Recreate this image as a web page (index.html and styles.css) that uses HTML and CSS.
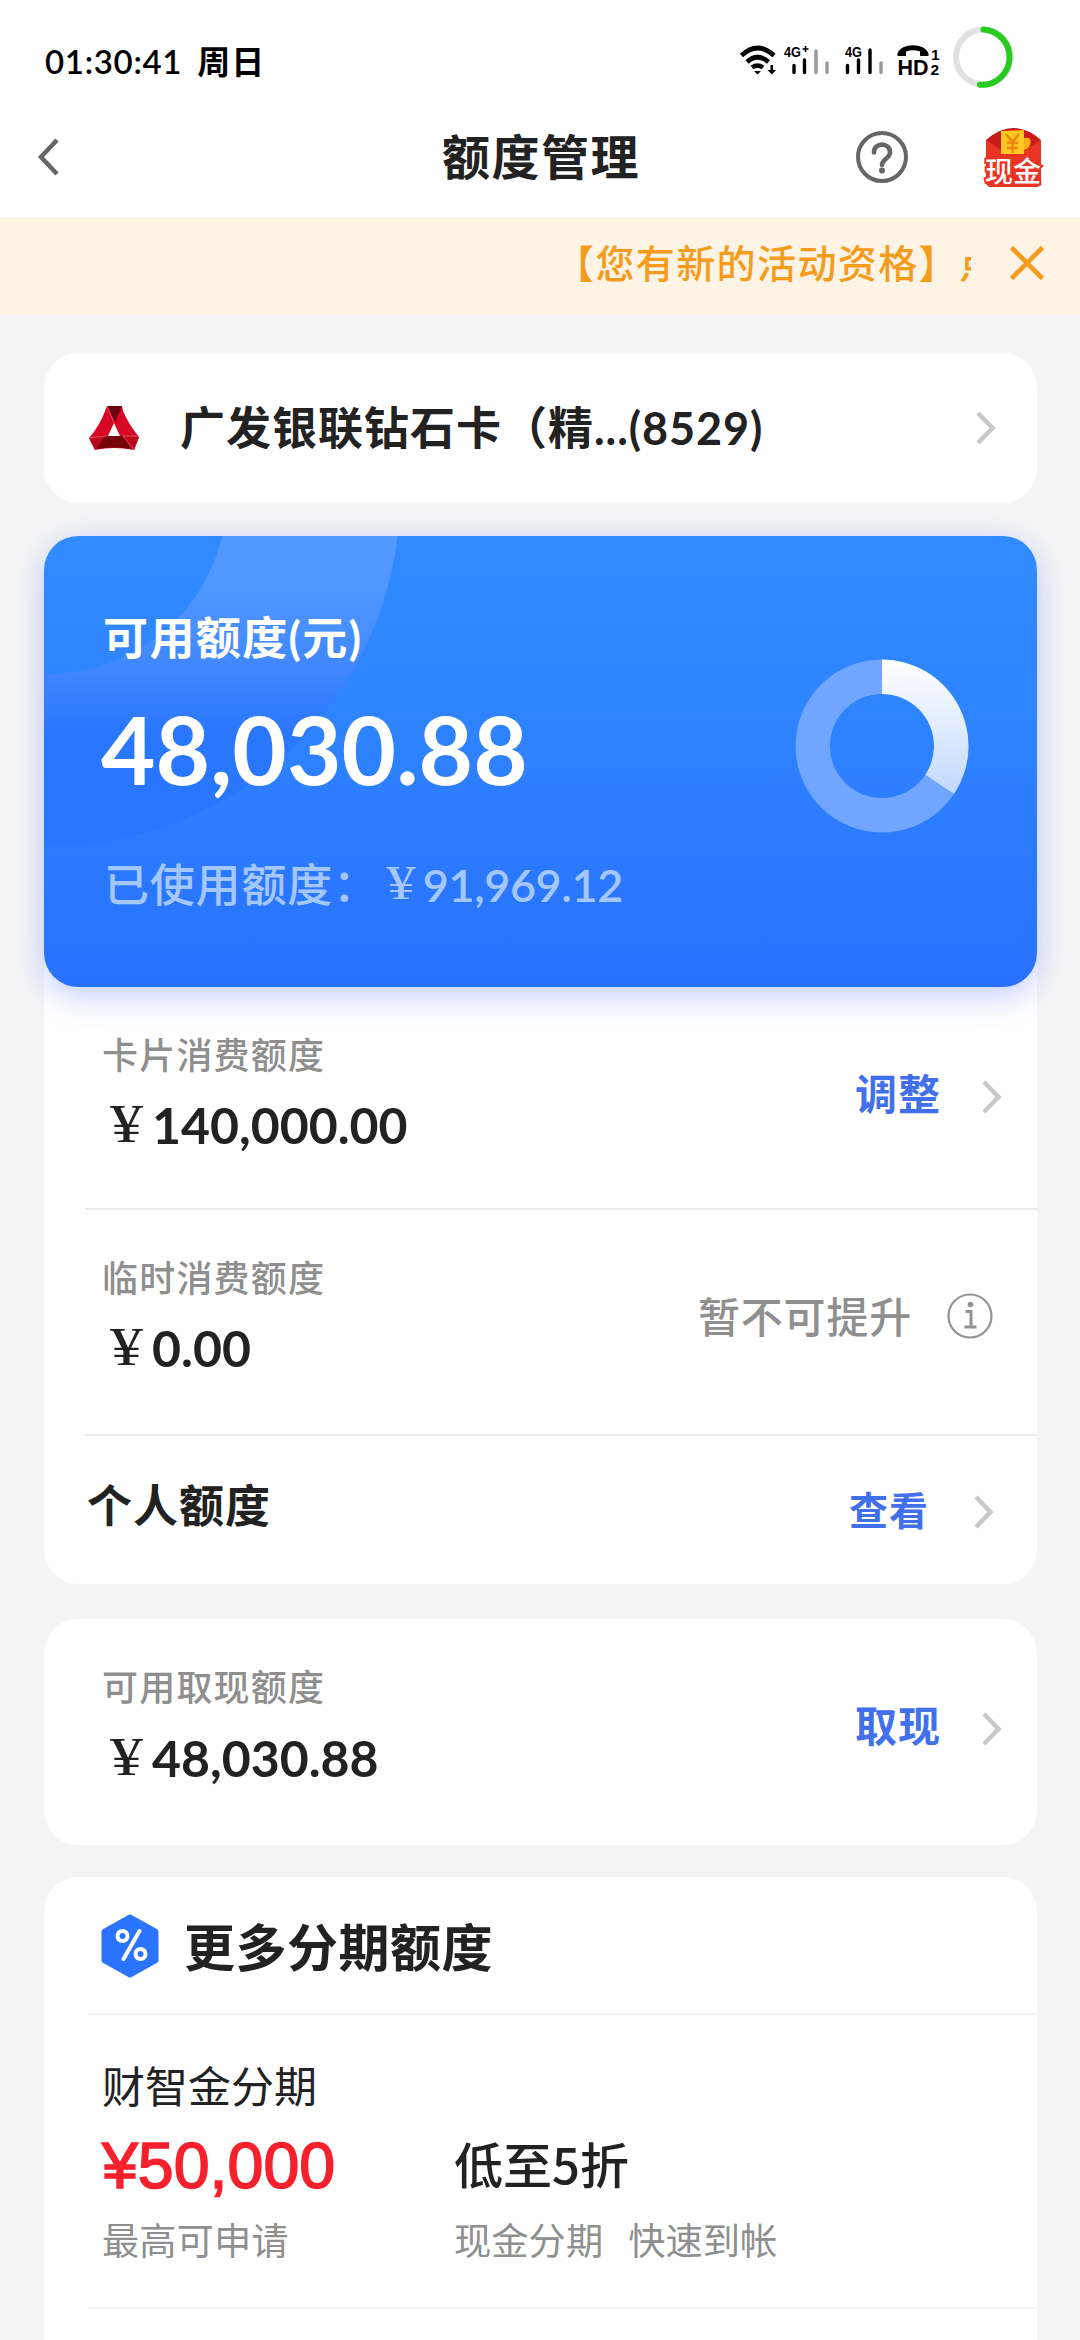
FILE: index.html
```html
<!DOCTYPE html>
<html lang="zh-CN">
<head>
<meta charset="utf-8">
<title>额度管理</title>
<link rel="stylesheet" href="styles.css">
</head>
<body>
<div class="statusbar">
  <div class="clock"><span class="time">01:30:41</span><span class="day">周日</span></div>
  <svg class="sysicons" width="290" height="64" viewBox="735 25 290 64">
    <g fill="none" stroke="#000" stroke-width="4.6">
      <path d="M741.5 55.5Q757.5 40.5 774 55.5"/>
      <path d="M747 62Q757.5 52.500 768.500 62"/>
      <path d="M752 67.500Q757.500 63.500 763 67.500"/>
    </g>
    <path d="M754 71h7l-3.500 3.500z"/>
    <path d="M770.500 65h2.500v5h3l-4.200 4.500-4.300-4.500h3z"/>
    <text class="net" x="784" y="56.500" textLength="17" lengthAdjust="spacingAndGlyphs">4G</text>
    <path d="M802.500 49h6M805.500 46v6" stroke="#000" stroke-width="1.700"/>
    <path d="M794 65.500v7M804.500 60v12.500" stroke="#000" stroke-width="3.400" stroke-linecap="round"/>
    <path d="M816 51v21.500M827 63v9.500" stroke="#999" stroke-width="3.400" stroke-linecap="round"/>
    <text class="net" x="845" y="56.500" textLength="17" lengthAdjust="spacingAndGlyphs">4G</text>
    <path d="M847.500 65.500v7M858.500 60v12.500M870 50v22.500" stroke="#000" stroke-width="3.400" stroke-linecap="round"/>
    <path d="M881 63v9.500" stroke="#999" stroke-width="3.400" stroke-linecap="round"/>
    <path d="M897.500 53.500C901 42.500 925 42.500 928.500 53.500V56h-8.500v-4.500q-7-2.500-14 0V56h-8.500z"/>
    <text class="hd" x="897.500" y="74.500" textLength="31" lengthAdjust="spacingAndGlyphs">HD</text>
    <text class="sim" x="931" y="60">1</text>
    <text class="sim" x="930.500" y="74.500">2</text>
    <circle cx="983.500" cy="57" r="27.500" fill="none" stroke="#e1e1e1" stroke-width="6"/>
    <path d="M983.500 29.500A27.500 27.500 0 0 1 980 84.800" fill="none" stroke="#25cc1e" stroke-width="6" stroke-linecap="round"/>
  </svg>
</div>

<header class="navbar">
  <svg class="back" width="28" height="44" viewBox="0 0 28 44"><path d="M22 5 6 22l16 17" fill="none" stroke="#666" stroke-width="4.500"/></svg>
  <h1 class="title">额度管理</h1>
  <svg class="help" width="54" height="54" viewBox="0 0 54 54">
    <circle cx="27" cy="27" r="24" fill="none" stroke="#666" stroke-width="4"/>
    <path d="M19 22.500c0-10.500 16-10.500 16 0 0 5.500-8 7-8 12.500" fill="none" stroke="#666" stroke-width="4.600" stroke-linecap="round"/>
    <circle cx="27" cy="40.500" r="3" fill="#666"/>
  </svg>
  <svg class="packet" width="60" height="62" viewBox="0 0 60 62">
    <path d="M3 14Q30-10 58 14V55q0 6-6 6H9q-6 0-6-6z" fill="#c91a1c"/>
    <path d="M3 14 22 26q8 3 16 0L58 14V55q0 6-6 6H9q-6 0-6-6z" fill="#e93323"/>
    <path d="M18 5 41 4v8h5q4 4-1 10l-11 6-16-3z" fill="#fcae16"/>
    <path d="M18 5h23v23H18z" fill="#ffc823"/>
    <path d="M23 8l6.500 8L36 8M29.500 16v11M24 17h11M24 22h11" stroke="#f0850d" stroke-width="2.400" fill="none"/>
    <text class="packet-text" x="2" y="55.500" textLength="56">现金</text>
  </svg>
</header>

<div class="notice">
  <div class="ticker">【您有新的活动资格】点</div>
  <svg class="close" width="38" height="38" viewBox="0 0 38 38"><path d="M3.500 3.500l31 31M34.500 3.500l-31 31" stroke="#f69c1c" stroke-width="4.600"/></svg>
</div>

<main class="content">
  <section class="card bankcard">
    <svg class="logo" width="50" height="46" viewBox="0 0 50 46">
      <path d="M18 1h15l1 5q6 14 16 26l-5 13Q25 41 6 45L0 33Q11 21 18 1z" fill="#d80625"/>
      <path d="M18 1h15l-7 16z" fill="#6f050c"/>
      <path d="M7 44l9-13h18l9 13q-18-3-36 0z" fill="#760509"/>
      <path d="M0 33l16-2-10 14zM50 32l-16-1 11 14z" fill="#b90a1f"/>
      <path d="M18 1l7 17M34 31h16M34 31l11 14M0 33l18-2" stroke="#f5687a" stroke-width=".7" fill="none"/>
      <path d="M25 18l6 13H19z" fill="#fff"/>
    </svg>
    <div class="cardname">广发银联钻石卡（精<span class="num">...(8529)</span></div>
    <svg class="chevron" width="22" height="36" viewBox="0 0 22 36"><path d="M3 3l14.500 15L3 33" fill="none" stroke="#c8c8c8" stroke-width="4.500"/></svg>
  </section>

  <section class="quota">
    <div class="hero">
      <svg class="rings" width="360" height="320" viewBox="0 0 360 320">
        <defs><linearGradient id="ringfill" gradientUnits="userSpaceOnUse" x1="0" y1="0" x2="0" y2="312">
          <stop offset="0" stop-color="#539aff"/><stop offset=".2" stop-color="#4e95ff"/><stop offset=".42" stop-color="#4087ff"/><stop offset=".64" stop-color="#2976ff"/><stop offset="1" stop-color="#2877ff"/>
        </linearGradient></defs>
        <circle cx="4" cy="-41" r="265.500" fill="none" stroke="url(#ringfill)" stroke-width="173"/>
      </svg>
      <div class="hero-text">
        <div class="hero-label">可用额度(元)</div>
        <div class="hero-amount">48,030.88</div>
        <div class="hero-used"><span>已使用额度：</span><span class="yen">¥</span><span class="used-num">91,969.12</span></div>
      </div>
      <svg class="donut" width="174" height="174" viewBox="-87 -87 174 174">
        <defs><linearGradient id="arc" x1="0" y1="0" x2="0" y2="1"><stop offset="0" stop-color="#fff"/><stop offset="1" stop-color="#c2d9ff"/></linearGradient></defs>
        <circle r="69.250" fill="none" stroke="#70a6ff" stroke-width="34.500"/>
        <path d="M0-86.500A86.500 86.500 0 0 1 72.100 47.700L43.400 28.700A52 52 0 0 0 0-52z" fill="url(#arc)"/>
      </svg>
    </div>
    <div class="row row-limit">
      <div class="info"><div class="label">卡片消费额度</div><div class="amount"><span class="yen">¥</span><span>140,000.00</span></div></div>
      <div class="action">调整</div>
      <svg class="chevron" width="22" height="36" viewBox="0 0 22 36"><path d="M3 3l14.500 15L3 33" fill="none" stroke="#c8c8c8" stroke-width="4.500"/></svg>
    </div>
    <div class="row row-temp">
      <div class="info"><div class="label">临时消费额度</div><div class="amount"><span class="yen">¥</span><span>0.00</span></div></div>
      <div class="action muted">暂不可提升</div>
      <svg class="infoicon" width="46" height="46" viewBox="0 0 46 46"><circle cx="23" cy="23" r="21.500" fill="none" stroke="#929292" stroke-width="2.200"/><circle cx="23.500" cy="11.500" r="2.800" fill="#929292"/><path d="M18.500 18.500h5.500v14.500M17.500 34h12" fill="none" stroke="#929292" stroke-width="3"/></svg>
    </div>
    <div class="row row-personal">
      <div class="personal">个人额度</div>
      <div class="action small">查看</div>
      <svg class="chevron" width="22" height="36" viewBox="0 0 22 36"><path d="M3 3l14.500 15L3 33" fill="none" stroke="#c8c8c8" stroke-width="4.500"/></svg>
    </div>
  </section>

  <section class="card cash">
    <div class="info"><div class="label">可用取现额度</div><div class="amount"><span class="yen">¥</span><span>48,030.88</span></div></div>
    <div class="action">取现</div>
    <svg class="chevron" width="22" height="36" viewBox="0 0 22 36"><path d="M3 3l14.500 15L3 33" fill="none" stroke="#c8c8c8" stroke-width="4.500"/></svg>
  </section>

  <section class="more">
    <div class="more-head">
      <svg width="58" height="64" viewBox="0 0 58 64">
        <path d="M29 3 55 17.500V46.500L29 61 3 46.500V17.500z" fill="#2b74ff" stroke="#2b74ff" stroke-width="5" stroke-linejoin="round"/>
        <g fill="none" stroke="#fff" stroke-width="4"><circle cx="21.500" cy="22" r="5"/><circle cx="39.500" cy="40" r="5"/><path d="M38.500 17 22.500 45" stroke-linecap="round"/></g>
      </svg>
      <h2>更多分期额度</h2>
    </div>
    <div class="product">
      <div class="pname">财智金分期</div>
      <div class="pcol"><div class="price">¥50,000</div><div class="sub">最高可申请</div></div>
      <div class="pcol"><div class="offer">低至5折</div><div class="sub pair"><span>现金分期</span><span>快速到帐</span></div></div>
    </div>
  </section>
</main>
</body>
</html>
```
FILE: styles.css
```css
* { box-sizing: border-box; margin: 0; padding: 0; }
body {
  width: 1080px;
  height: 2340px;
  overflow: hidden;
  background: #f5f5f5;
  color: #222;
  font-family: "Lato", "Noto Sans CJK SC", sans-serif;
}
svg { display: block; flex: none; }
div, span, h1, h2 { white-space: nowrap; }

.statusbar {
  display: flex;
  justify-content: space-between;
  height: 100px;
  padding: 25px 55px 0 45px;
  background: #fff;
  color: #000;
}
.clock { display: flex; gap: 15px; line-height: 72px; }
.time { font-size: 33px; font-weight: 600; letter-spacing: 0.7px; }
.day { font-size: 33px; font-weight: 700; letter-spacing: 1px; }
.net { font: 700 15.5px "Liberation Sans", sans-serif; }
.hd { font: 700 22px "Liberation Sans", sans-serif; }
.sim { font: 700 15.5px "Liberation Sans", sans-serif; }

.navbar {
  display: flex;
  align-items: center;
  height: 117px;
  padding: 0 35px 4px 35px;
  background: #fff;
}
.title {
  width: 210px;
  margin-left: 379px;
  font-size: 48px;
  line-height: 60px;
  letter-spacing: 1.5px;
}
.help { margin-left: 203px; }
.packet { margin-left: 74px; overflow: visible; }
.packet-text {
  font: 500 28px "Noto Sans CJK SC", sans-serif;
  fill: #fff;
  stroke: #e93323;
  stroke-width: 4px;
  paint-order: stroke;
}

.notice {
  display: flex;
  align-items: center;
  justify-content: flex-end;
  gap: 37px;
  height: 98px;
  padding: 0 35px 7px 0;
  background: #fef4e6;
}
.ticker {
  width: 416px;
  overflow: hidden;
  color: #f69c1c;
  font-size: 39px;
  font-weight: 500;
  line-height: 60px;
  letter-spacing: 1.4px;
}
.close { margin-right: -1px; }

.content { padding: 38px 43px 0 44px; }
.card { border-radius: 34px; background: #fff; }
.bankcard {
  display: flex;
  align-items: center;
  height: 150px;
  padding: 0 40px 0 45px;
}
.cardname {
  flex: 1;
  margin-left: 41px;
  font-size: 45px;
  font-weight: 700;
  line-height: 60px;
  letter-spacing: 1px;
}
.num { letter-spacing: .9px; }

.quota {
  height: 1048px;
  margin-top: 33px;
  border-radius: 34px;
  background: #fff;
}
.hero {
  position: relative;
  display: flex;
  justify-content: space-between;
  height: 451px;
  padding: 72px 68px 0 57px;
  border-radius: 34px;
  background: linear-gradient(#318bff, #2e82ff 45%, #2871ff);
  box-shadow: 0 8px 32px rgba(66, 105, 255, .34);
}
.rings {
  position: absolute;
  left: 0;
  top: 0;
  border-radius: 34px 0 0 0;
}
.hero-text { position: relative; color: #fff; }
.hero-label { padding-left: 2px; font-size: 45px; font-weight: 700; line-height: 60px; letter-spacing: 1.4px; }
.hero-amount { margin-top: 31px; font-size: 94px; font-weight: 700; line-height: 100px; letter-spacing: .1px; }
.hero-used {
  display: flex;
  margin-top: 56px;
  padding-left: 3px;
  color: #a5c7ff;
  font-size: 45px;
  font-weight: 500;
  line-height: 60px;
  letter-spacing: .8px;
}
.hero-used .yen { width: 44px; }
.used-num { font-weight: 600; letter-spacing: -.4px; }
.donut { margin-top: 51px; }

.yen {
  display: inline-block;
  width: 51px;
  text-align: center;
  font-family: "Liberation Serif", serif;
  font-size: 1.1em;
  font-weight: 400;
  line-height: 1;
  letter-spacing: 0;
  transform: translateY(-2px) scaleX(1.2);
}
.hero-used .yen { line-height: 60px; }

.row { display: flex; margin-left: 41px; padding-right: 34px; }
.row-limit { height: 221px; padding-left: 16px; padding-top: 43px; }
.row-temp { height: 226px; padding-left: 16px; padding-top: 43px; border-top: 2px solid #ebebeb; }
.row-personal { height: 150px; padding-left: 2px; padding-right: 42px; border-top: 2px solid #ebebeb; }
.info { flex: 1; }
.label { padding-left: 1px; color: #8f8f8f; font-size: 36px; font-weight: 500; line-height: 50px; letter-spacing: 1.2px; }
.amount { height: 62px; margin-top: 14px; font-size: 50px; font-weight: 700; line-height: 62px; letter-spacing: 0; }
.action { color: #4270ec; font-size: 42px; font-weight: 700; line-height: 60px; letter-spacing: 1px; }
.action + .chevron { margin-left: 40px; }
.row-limit .action { padding-top: 34px; }
.row-limit .chevron { margin-top: 49px; }
.row-temp { padding-right: 44px; }
.row-temp .action { padding-top: 34px; }
.action.muted { color: #8f8f8f; font-weight: 500; letter-spacing: .8px; }
.infoicon { margin: 40px 0 0 35px; }
.personal { flex: 1; font-size: 45px; font-weight: 700; line-height: 141px; letter-spacing: 1px; }
.action.small { font-size: 39px; line-height: 148px; }
.row-personal .chevron { margin-top: 58px; margin-left: 44px; }

.cash {
  display: flex;
  height: 226px;
  margin-top: 35px;
  padding: 43px 34px 0 57px;
}
.cash .amount { margin-top: 15px; }
.cash .action { padding-top: 34px; }
.cash .chevron { margin-top: 49px; }

.more { height: 480px; margin-top: 32px; border-radius: 34px 34px 0 0; background: #fff; }
.more-head {
  display: flex;
  align-items: center;
  gap: 25px;
  height: 138px;
  margin-left: 44px;
  padding: 1px 0 0 13px;
  border-bottom: 2px solid #f3f3f3;
}
.more-head h2 { padding-top: 5px; font-size: 51px; line-height: 70px; letter-spacing: .5px; }
.product {
  display: grid;
  grid-template-columns: 352px 1fr;
  height: 294px;
  margin-left: 44px;
  padding: 41px 0 0 14px;
  border-bottom: 2px solid #f3f3f3;
  align-content: start;
  font-family: "Noto Sans CJK SC", sans-serif;
}
.pname { grid-column: 1 / 3; font-size: 43px; line-height: 56px; }
.price {
  margin-top: 19px;
  color: #f8202c;
  font-family: "Liberation Sans", sans-serif;
  font-size: 64.5px;
  line-height: 70px;
  -webkit-text-stroke: 1.6px #f8202c;
}
.offer { margin-top: 15px; font-size: 49px; font-weight: 500; line-height: 72px; }
.sub { margin-top: 13px; color: #8f8f8f; font-size: 37.3px; line-height: 50px; }
.offer + .sub { margin-top: 15px; }
.pair { display: flex; gap: 25px; }
```
